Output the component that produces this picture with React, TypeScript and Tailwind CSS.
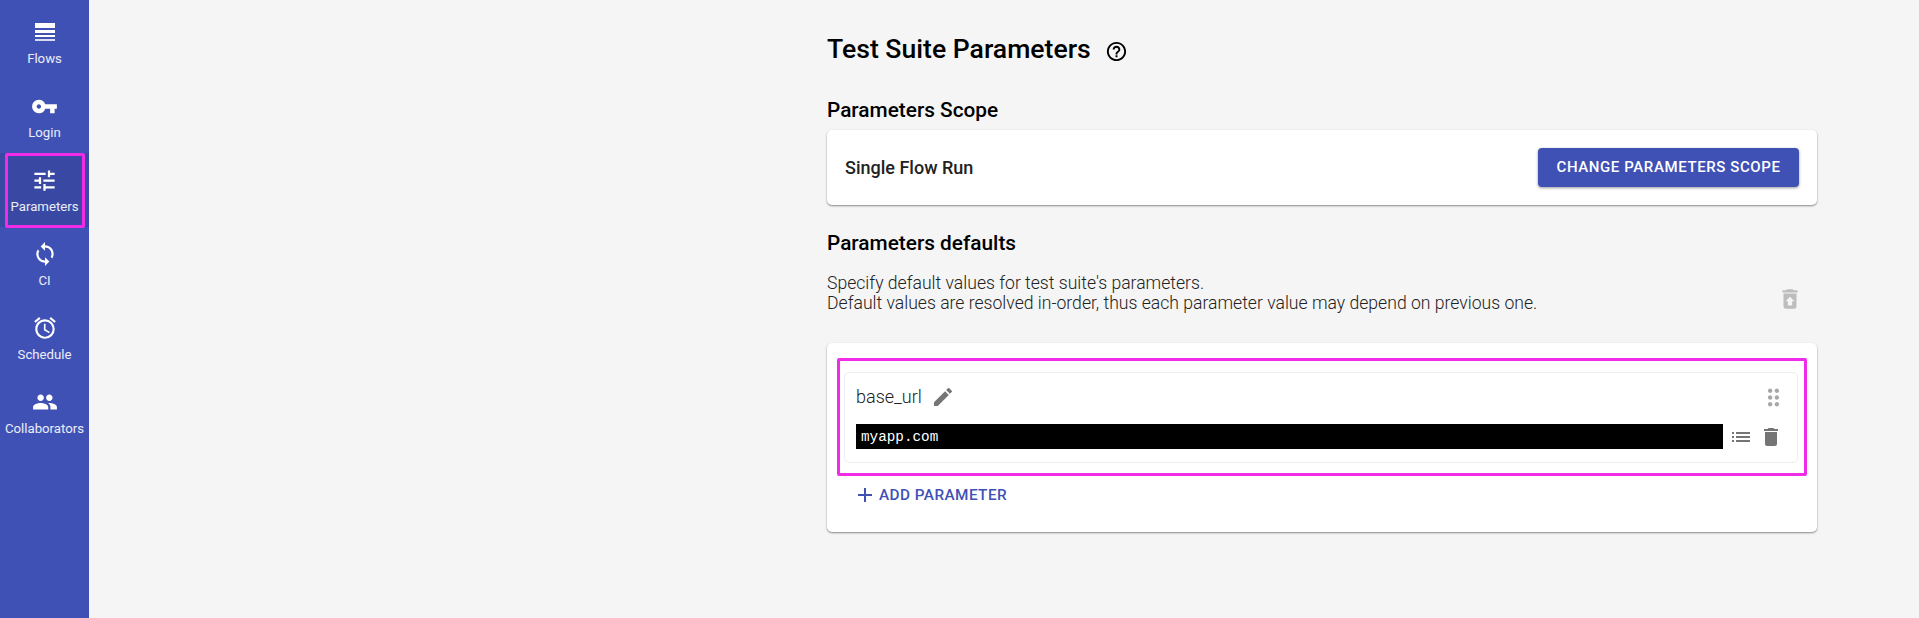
import type { ReactNode } from 'react';
import {
  MdAccessAlarm,
  MdAdd,
  MdDelete,
  MdDragIndicator,
  MdEdit,
  MdHelpOutline,
  MdList,
  MdPeople,
  MdRestoreFromTrash,
  MdSync,
  MdTune,
  MdVpnKey,
} from 'react-icons/md';

// Bars get thinner toward the bottom, no stock icon has that
const FlowsIcon = () => (
  <svg width="30" height="30" viewBox="0 0 30 30" fill="currentColor">
    <rect x="5" y="6" width="20" height="5" />
    <rect x="5" y="13" width="20" height="3" />
    <rect x="5" y="18" width="20" height="2" />
    <rect x="5" y="22" width="20" height="2" opacity="0.8" />
  </svg>
);

const navItems = [
  { label: 'Flows', icon: <FlowsIcon /> },
  { label: 'Login', icon: <MdVpnKey size={27} /> },
  { label: 'Parameters', icon: <MdTune size={27} />, active: true },
  { label: 'CI', icon: <MdSync size={26} /> },
  { label: 'Schedule', icon: <MdAccessAlarm size={26} /> },
  { label: 'Collaborators', icon: <MdPeople size={26} /> },
];

const Card = ({ className, children }: { className: string; children: ReactNode }) => (
  <div className={`rounded-[5px] bg-white shadow-[0_1px_2px_rgba(0,0,0,0.45)] ${className}`}>{children}</div>
);

const Sidebar = () => (
  <aside className="flex w-[89px] shrink-0 flex-col bg-[#3f51b5] pt-[5px] text-white">
    {navItems.map((item) => (
      <div
        key={item.label}
        className={`relative flex h-[74px] flex-col items-center pt-[12px] ${item.active ? 'bg-[#3949a3]' : ''}`}
      >
        <div className="flex h-[30px] items-center justify-center">{item.icon}</div>
        <span className="mt-[4px] text-[13.2px] leading-[16px] whitespace-nowrap text-white/90">{item.label}</span>
        {item.active && (
          <div className="absolute left-[5px] top-0 h-[75px] w-[80px] rounded-[2px] border-[3px] border-[#f02ce8]" />
        )}
      </div>
    ))}
  </aside>
);

const App = () => {
  return (
    <div className="flex h-[618px] w-[1919px] overflow-hidden bg-[#f5f5f5] font-['Roboto',sans-serif]">
      <Sidebar />
      <main className="ml-[738px] w-[990px] pt-[31px]">
        {/* Page title */}
        <div className="flex h-[36px] items-center">
          <h1 className="text-[26.6px] leading-[36px] font-medium text-black">Test Suite Parameters</h1>
          <MdHelpOutline size={23} className="ml-[14px] mt-[5px] text-black" />
        </div>

        {/* Scope */}
        <h2 className="mt-[30px] text-[20.8px] leading-[26px] font-medium text-black">Parameters Scope</h2>
        <Card className="mt-[7px] flex h-[75px] items-center justify-between px-[18px]">
          <span className="text-[18px] font-medium text-[#222]">Single Flow Run</span>
          <button className="h-[39px] w-[261px] rounded-[4px] bg-[#3f51b5] text-[15px] font-medium tracking-[0.6px] text-white shadow-[0_1px_3px_rgba(0,0,0,0.4)]">
            CHANGE PARAMETERS SCOPE
          </button>
        </Card>

        {/* Defaults */}
        <h2 className="mt-[25px] text-[20.8px] leading-[26px] font-medium text-black">Parameters defaults</h2>
        <div className="mt-[17px] flex items-start justify-between pr-[14px]">
          <p className="text-[17.6px] leading-[20px] font-light text-[#222]">
            Specify default values for test suite's parameters.
            <br />
            Default values are resolved in-order, thus each parameter value may depend on previous one.
          </p>
          <MdRestoreFromTrash size={26} className="mt-[13px] text-[#bdbdbd]" />
        </div>

        <Card className="mt-[30px] h-[189px] px-[10px] pt-[15px]">
          <div className="rounded-[2px] border-[3px] border-[#f02ce8] pt-[11px] pr-[6px] pb-[10px] pl-[4px]">
            <div className="h-[91px] rounded-[5px] border border-[#eeeeee] pt-[12px] pr-[14px] pl-[11px]">
              <div className="flex h-[24px] items-center justify-between">
                <div className="flex items-center">
                  <span className="text-[18px] leading-[24px] font-light text-[#222]">base_url</span>
                  <MdEdit size={24} className="ml-[9px] text-[#757575]" />
                </div>
                <MdDragIndicator size={27} className="mr-[-4px] text-[#a8a8a8]" />
              </div>
              <div className="mt-[15px] flex items-center">
                <div className="h-[25px] flex-1 bg-black pl-[5px] font-['Liberation_Mono',monospace] text-[14.3px] leading-[26px] text-white">
                  myapp.com
                </div>
                <MdList size={24} className="ml-[6px] text-[#757575]" />
                <MdDelete size={24} className="ml-[6px] text-[#757575]" />
              </div>
            </div>
          </div>
          <div className="mt-[8px] ml-[16px] flex h-[22px] items-center text-[#3f51b5]">
            <MdAdd size={24} />
            <span className="ml-[2px] text-[15.3px] font-medium tracking-[0.45px]">ADD PARAMETER</span>
          </div>
        </Card>
      </main>
    </div>
  );
};

export default App;
